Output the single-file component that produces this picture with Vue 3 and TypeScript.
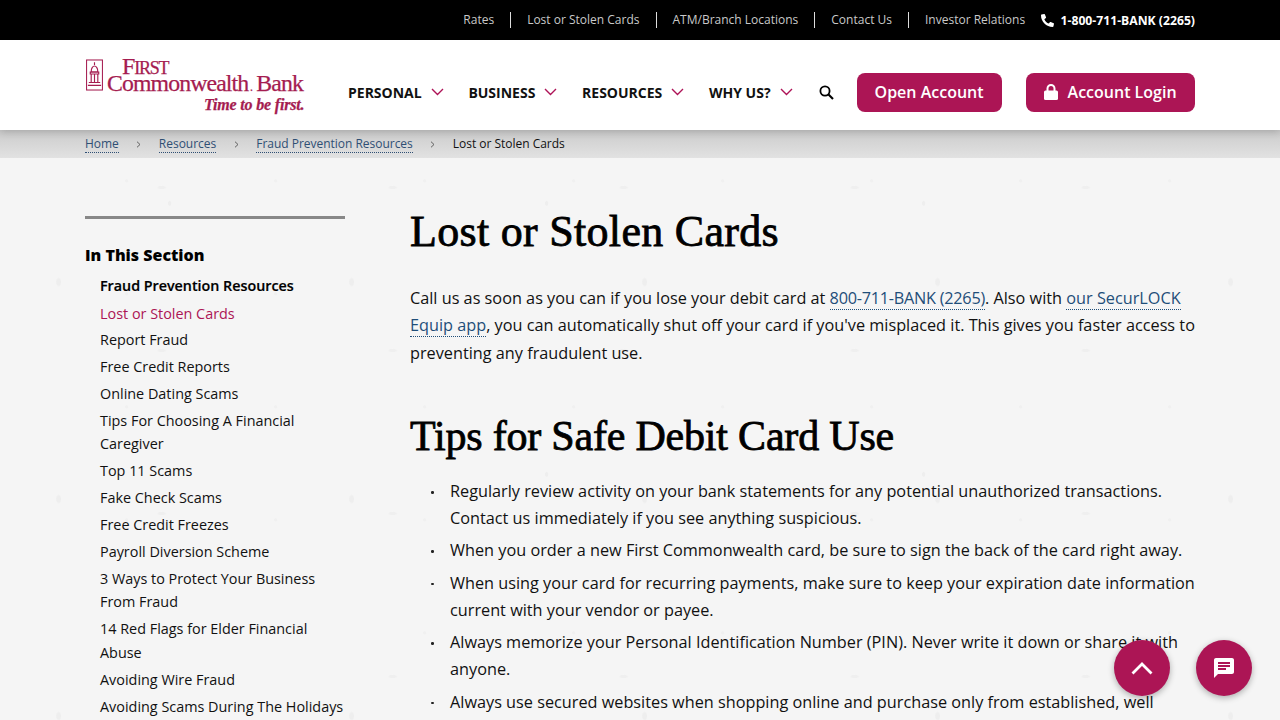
<template>
  <div class="page">
    <div class="topbar">
      <div class="wrap topbar-inner">
        <a v-for="link in topLinks" :key="link" class="top-link">{{ link }}</a>
        <span class="top-phone">
          <svg width="13" height="13" viewBox="0 0 512 512"><path transform="matrix(-1 0 0 1 512 0)" fill="#fff" d="M493 24 389 0c-11-3-23 3-27 14l-48 112c-4 10-1 21 7 28l60 49c-36 77-99 140-176 176l-49-60c-7-8-18-11-28-7L14 360c-11 5-17 17-14 28l24 104c3 11 12 20 24 20 257 0 464-207 464-464 0-12-8-21-19-24z"/></svg>
          1-800-711-BANK (2265)
        </span>
      </div>
    </div>

    <header class="header">
      <div class="wrap header-inner">
        <div class="logo">
          <svg class="seal" width="17" height="32" viewBox="0 0 18 33">
            <rect x="0.6" y="0.6" width="16.800" height="31.8" fill="none" stroke="#a51c50" stroke-width="1.1" />
            <path d="M9 3v3M5.500 13c0-4 2-6 3.500-6s3.500 2 3.500 6zM4.500 13.500h9v2h-9zM5.500 16v8M9 16v8M12.500 16v8M3 24.500h12M2 27.500h14" fill="none" stroke="#a51c50" stroke-width="1.2" />
          </svg>
          <div class="logo-text">
            <div class="logo-first">F<small>IRST</small></div>
            <div class="logo-name">Commonwealth<i>.</i>Bank</div>
            <div class="logo-tag">Time to be first.</div>
          </div>
        </div>

        <nav class="nav">
          <a v-for="item in navItems" :key="item" class="nav-item">
            {{ item }}
            <svg width="13" height="8" viewBox="0 0 13 8"><path d="M1 1l5.500 5.500L12 1" fill="none" stroke="#ae1357" stroke-width="1.400" /></svg>
          </a>
        </nav>
        <svg class="search" width="15" height="15" viewBox="0 0 15 15"><circle cx="6" cy="6" r="4.600" fill="none" stroke="#000" stroke-width="1.800" /><path d="M9.500 9.500l4.500 4.500" stroke="#000" stroke-width="2.100" /></svg>
        <a class="btn btn-open">Open Account</a>
        <a class="btn btn-login">
          <svg width="14" height="16" viewBox="0 0 14 16"><path d="M3.500 7V4.500a3.500 3.500 0 0 1 7 0V7" fill="none" stroke="#fff" stroke-width="2" /><rect x="0" y="6.500" width="14" height="9.500" rx="1.500" fill="#fff" /></svg>
          Account Login
        </a>
      </div>
    </header>

    <div class="crumbs">
      <div class="wrap crumbs-inner">
        <template v-for="c in crumbs" :key="c">
          <a class="crumb">{{ c }}</a>
          <svg class="crumb-sep" width="5" height="7" viewBox="0 0 5 7"><path d="M1 .7l3 2.800-3 2.800" fill="none" stroke="#555" stroke-width=".9" /></svg>
        </template>
        <span class="crumb-current">Lost or Stolen Cards</span>
      </div>
    </div>

    <div class="wrap main">
      <aside class="side">
        <h3 class="side-title">In This Section</h3>
        <div class="side-parent">Fraud Prevention Resources</div>
        <a v-for="item in sideItems" :key="item" class="side-link" :class="{ active: item === 'Lost or Stolen Cards' }">{{ item }}</a>
      </aside>

      <main class="content">
        <h1>Lost or Stolen Cards</h1>
        <p>
          Call us as soon as you can if you lose your debit card at <a class="tel">800-711-BANK (2265)</a>. Also with <a>our SecurLOCK Equip app</a>, you can automatically shut off your card if you've misplaced it. This gives you faster access to preventing any fraudulent use.
        </p>
        <h2>Tips for Safe Debit Card Use</h2>
        <ul>
          <li v-for="tip in tips" :key="tip">{{ tip }}</li>
        </ul>
      </main>
    </div>

    <button class="fab fab-top" aria-label="Back to top">
      <svg width="22" height="13" viewBox="0 0 22 13"><path d="M1.500 11.500L11 2l9.500 9.500" fill="none" stroke="#fff" stroke-width="2.800" /></svg>
    </button>
    <button class="fab fab-chat" aria-label="Chat">
      <svg width="24" height="24" viewBox="0 0 24 24"><path fill="#fff" d="M20 2H4c-1.100 0-2 .9-2 2v18l4-4h14c1.100 0 2-.9 2-2V4c0-1.100-.9-2-2-2zM6 9h12v2H6zm8 5H6v-2h8zm4-6H6V6h12z" /></svg>
    </button>
  </div>
</template>

<script setup lang="ts">
const topLinks = ['Rates', 'Lost or Stolen Cards', 'ATM/Branch Locations', 'Contact Us', 'Investor Relations']
const navItems = ['Personal', 'Business', 'Resources', 'Why Us?']
const crumbs = ['Home', 'Resources', 'Fraud Prevention Resources']

const sideItems = [
  'Lost or Stolen Cards',
  'Report Fraud',
  'Free Credit Reports',
  'Online Dating Scams',
  'Tips For Choosing A Financial Caregiver',
  'Top 11 Scams',
  'Fake Check Scams',
  'Free Credit Freezes',
  'Payroll Diversion Scheme',
  '3 Ways to Protect Your Business From Fraud',
  '14 Red Flags for Elder Financial Abuse',
  'Avoiding Wire Fraud',
  'Avoiding Scams During The Holidays',
]

const tips = [
  'Regularly review activity on your bank statements for any potential unauthorized transactions. Contact us immediately if you see anything suspicious.',
  'When you order a new First Commonwealth card, be sure to sign the back of the card right away.',
  'When using your card for recurring payments, make sure to keep your expiration date information current with your vendor or payee.',
  'Always memorize your Personal Identification Number (PIN). Never write it down or share it with anyone.',
  'Always use secured websites when shopping online and purchase only from established, well known merchants.',
]
</script>

<style>
html, body {
  height: 100%;
  overflow: hidden;
}
</style>

<style scoped>
.page {
  height: 720px;
  overflow: hidden;
  font-family: "Open Sans", sans-serif;
  color: #111;
  background-color: #f5f5f5;
  background-image:
    radial-gradient(ellipse 3px 5px at 20% 30%, #eeeeee 0 60%, transparent 100%),
    radial-gradient(ellipse 5px 2px at 70% 15%, #efefef 0 60%, transparent 100%),
    radial-gradient(ellipse 2px 3px at 45% 75%, #eeeeee 0 60%, transparent 100%),
    radial-gradient(ellipse 2px 2px at 85% 60%, #f0f0f0 0 60%, transparent 100%);
  background-size: 293px 217px, 231px 163px, 377px 271px, 149px 113px;
}
.wrap {
  width: 1110px;
  margin-left: 85px;
}
.topbar {
  height: 40px;
  background: #000;
}
.topbar-inner {
  height: 100%;
  display: flex;
  align-items: center;
  justify-content: flex-end;
}
.top-link {
  color: #c9c9c9;
  font-size: 12px;
  line-height: 16px;
  padding: 0 16px;
  border-right: 1px solid #ddd;
}
.top-link:nth-child(5) {
  border-right: none;
  margin-right: -0.600px;
}
.top-phone {
  display: flex;
  align-items: center;
  gap: 7px;
  color: #fff;
  font-size: 12.200px;
  font-weight: 700;
}
.header {
  position: relative;
  z-index: 2;
  height: 90px;
  background: #fff;
  box-shadow: 0 2px 8px rgba(0, 0, 0, 0.18);
}
.header-inner {
  height: 100%;
  box-sizing: border-box;
  padding-top: 14px;
  display: flex;
  align-items: center;
}
.logo {
  width: 263px;
  height: 56px;
  margin-top: -12px;
  display: flex;
  align-items: flex-start;
  gap: 4px;
  color: #a51c50;
  font-family: "Liberation Serif", serif;
  -webkit-text-stroke: 0.25px #a51c50;
}
.seal {
  flex: none;
  margin: 1px 0 0 1px;
}
.logo-text {
  width: 197px;
}
.logo-first {
  margin-left: 15px;
  font-size: 24px;
  line-height: 17px;
  letter-spacing: -1.200px;
}
.logo-first small {
  font-size: 18px;
}
.logo-name {
  margin-top: -3px;
  font-size: 23.800px;
  line-height: 18px;
  letter-spacing: -0.900px;
  white-space: nowrap;
}
.logo-name i {
  margin: 0 4px 0 2px;
  font-size: 12px;
}
.logo-tag {
  margin: 1px 0 0 97px;
  font-size: 16px;
  line-height: 16px;
  font-style: italic;
  font-weight: 700;
  letter-spacing: -0.180px;
  white-space: nowrap;
}
.nav {
  display: flex;
  gap: 24.700px;
}
.nav-item {
  display: flex;
  align-items: center;
  gap: 9px;
  font-size: 14px;
  font-weight: 700;
  text-transform: uppercase;
  color: #111;
}
.search {
  margin: 0 23px 0 26px;
}
.btn {
  height: 39px;
  display: flex;
  align-items: center;
  justify-content: center;
  gap: 10px;
  border-radius: 8px;
  background: #ac1555;
  color: #fff;
  font-size: 16px;
  font-weight: 600;
}
.btn-open {
  width: 145px;
}
.btn-login {
  width: 169px;
  margin-left: 24px;
}
.crumbs {
  height: 28px;
  background: linear-gradient(#cbcbcb, #e2e2e2);
}
.crumbs-inner {
  height: 100%;
  display: flex;
  align-items: center;
  font-size: 12px;
  letter-spacing: -0.02px;
  color: #111;
}
.crumb {
  color: #2f4f74;
  border-bottom: 1px dotted #2f4f74;
}
.crumb-current {
  border-bottom: 1px solid transparent;
}
.crumb-sep {
  margin: 0 17.500px;
}
.main {
  display: flex;
  gap: 65px;
  padding-top: 58px;
}
.side {
  width: 260px;
  flex: none;
  border-top: 3px solid #888;
}
.side-title {
  margin: 24px 0 0;
  font-size: 16px;
  line-height: 24px;
  font-weight: 800;
  color: #000;
}
.side-parent {
  margin: 7px 0 4px 15px;
  font-size: 14.300px;
  line-height: 24px;
  font-weight: 600;
  -webkit-text-stroke: 0.2px #000;
  color: #000;
}
.side-link {
  display: block;
  margin: 0 0 3.200px 15px;
  font-size: 14.400px;
  line-height: 23.700px;
  color: #111;
}
.side-link.active {
  margin-bottom: 2.200px;
  color: #ac1555;
}
.content {
  flex: 1;
  font-size: 16.250px;
  line-height: 27.500px;
}
h1, h2 {
  margin: 0;
  font-family: "Liberation Serif", serif;
  font-weight: 400;
  -webkit-text-stroke: 0.8px #000;
  color: #000;
}
h1 {
  margin-top: -14px;
  font-size: 44px;
  line-height: 60px;
  letter-spacing: 0.3px;
}
h2 {
  margin-top: 41px;
  font-size: 42px;
  line-height: 56px;
  letter-spacing: -0.2px;
}
p {
  margin: 22.500px 0 0;
}
p a {
  color: #1f4e79;
  border-bottom: 1px dotted #1f4e79;
}
p a.tel {
  letter-spacing: -0.250px;
}
ul {
  margin: 14px 0 0;
  padding: 0 0 0 40px;
  list-style: none;
}
li {
  display: flex;
  margin: 0 0 5.400px -19px;
  line-height: 27px;
}
li::before {
  content: "";
  flex: none;
  width: 2.500px;
  height: 2.500px;
  margin: 13px 16.500px 0 0;
  border-radius: 50%;
  background: #222;
}
.fab {
  position: fixed;
  top: 640px;
  width: 56px;
  height: 56px;
  padding: 0;
  border: none;
  border-radius: 50%;
  display: flex;
  align-items: center;
  justify-content: center;
  background: #ac1555;
  box-shadow: 0 2px 6px rgba(0, 0, 0, 0.3);
}
.fab-top {
  left: 1114px;
}
.fab-chat {
  left: 1196px;
}
</style>
